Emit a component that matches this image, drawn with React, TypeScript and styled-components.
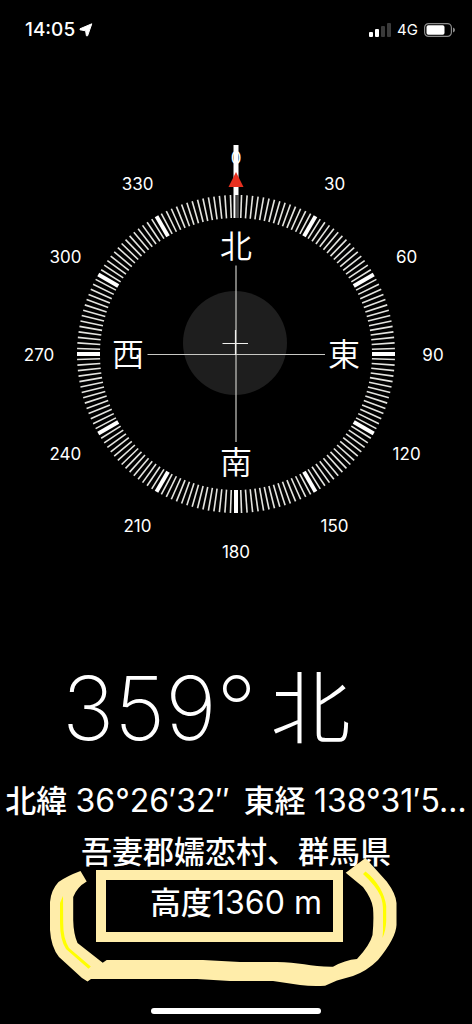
import React from "react";
import styled, { createGlobalStyle } from "styled-components";

const GlobalStyle = createGlobalStyle`
  *, *::before, *::after { box-sizing: border-box; }
  body {
    margin: 0;
    background: #000;
    color: #fff;
    font-family: Inter, "Noto Sans CJK JP", sans-serif;
  }
`;

const Screen = styled.main`
  display: flex;
  flex-direction: column;
  min-height: 100vh;
  overflow: hidden;
`;

const StatusBar = styled.header`
  display: flex;
  align-items: center;
  justify-content: space-between;
  height: 59px;
  padding: 0 17px 0 25px;
`;

const StatusGroup = styled.div<{ $gap: number }>`
  display: flex;
  align-items: center;
  gap: ${(p) => p.$gap}px;
`;

const Clock = styled.time`
  font-size: 19px;
  font-weight: 500;
  line-height: 24px;
`;

const Network = styled.span`
  font-size: 15px;
  font-weight: 400;
  line-height: 20px;
`;

const Dial = styled.svg`
  display: block;
  width: 100%;
  margin-top: 77px;
`;

const DialNumber = styled.text`
  fill: #fff;
  font-size: 17px;
  text-anchor: middle;
`;

const DialPoint = styled.text`
  fill: #fff;
  font-size: 32px;
  font-weight: 350;
  text-anchor: middle;
`;

const Heading = styled.h1`
  display: flex;
  align-items: center;
  gap: 14px;
  height: 134px;
  margin: 75px 0 0;
  padding-left: 62px;
  font-size: 88px;
  font-weight: 250;
  line-height: 134px;
  white-space: nowrap;
`;

const HeadingPoint = styled.span`
  font-size: 80px;
  font-weight: 300;
`;

const Details = styled.section`
  position: relative;
  font-size: 31px;
  font-weight: 500;
  line-height: 51px;
  text-align: center;
  white-space: nowrap;
`;

const Line = styled.p`
  display: flex;
  align-items: baseline;
  justify-content: center;
  height: 51px;
  margin: 0;
`;

const Coordinates = styled(Line)`
  gap: 14px;
`;

const Value = styled.span`
  font-size: 32px;
  font-weight: 400;
`;

const Marker = styled.svg`
  position: absolute;
  top: 0;
  left: 0;
  width: 100%;
  pointer-events: none;
`;

const HomeBar = styled.div`
  width: 36%;
  height: 6px;
  margin: auto auto 10px;
  border-radius: 3px;
  background: #fff;
`;

const CX = 236;
const CY = 218;
const LABEL_RADIUS = 197;

const ticks = Array.from({ length: 180 }, (_, i) => i * 2).filter((a) => a !== 0);
const labels = Array.from({ length: 12 }, (_, i) => i * 30);
const points = [
  { name: "北", x: CX, y: 122 },
  { name: "東", x: 344, y: 230 },
  { name: "南", x: CX, y: 338 },
  { name: "西", x: 128, y: 230 },
];

function CompassDial() {
  return (
    <Dial viewBox="0 0 472 430" role="img" aria-label="コンパス">
      <circle cx="235" cy="207" r="52" fill="#1e1e1e" />
      {ticks.map((angle) => (
        <line
          key={angle}
          x1={CX}
          x2={CX}
          y1={CY - 159}
          y2={CY - 136}
          stroke={angle % 30 === 0 ? "#fff" : "#e4e4e0"}
          strokeWidth={angle % 30 === 0 ? 4 : 1.6}
          transform={`rotate(${angle} ${CX} ${CY})`}
        />
      ))}
      <path d="M236 129.500V306M147.500 218.500H325" stroke="#c8c8c4" strokeWidth="1.200" />
      <path d="M222.500 207.500H248M235.500 194V219" stroke="#f0f0ee" strokeWidth="1.200" />
      {labels.map((angle) => {
        const rad = (angle * Math.PI) / 180;
        return (
          <DialNumber
            key={angle}
            x={CX + LABEL_RADIUS * Math.sin(rad)}
            y={CY + 7 - LABEL_RADIUS * Math.cos(rad)}
          >
            {angle}
          </DialNumber>
        );
      })}
      {points.map((p) => (
        <DialPoint key={p.name} x={p.x} y={p.y}>
          {p.name}
        </DialPoint>
      ))}
      <path d="M236 9V59" stroke="#fff" strokeWidth="5" />
      <path d="M234.500 59V82" stroke="#fff" strokeWidth="2" />
      <path d="M237.500 59V82" stroke="#555" strokeWidth="2.600" />
      <path d="M236 36L243.500 51H228.500Z" fill="#e8301f" />
    </Dial>
  );
}

function LocationArrow() {
  return (
    <svg width="14" height="14" viewBox="0 0 14 14" aria-hidden="true">
      <path
        d="M12.800 .8L1 5.800V6.800L6.600 7.800L7.400 12.800H8.600Z"
        fill="#fff"
        stroke="#fff"
        strokeWidth="1"
        strokeLinejoin="round"
      />
    </svg>
  );
}

function Signal() {
  return (
    <svg width="22" height="14" viewBox="0 0 22 14" aria-hidden="true">
      <rect x="0" y="9" width="4" height="5" rx="1" fill="#fff" />
      <rect x="6" y="6" width="4" height="8" rx="1" fill="#fff" />
      <rect x="12" y="3" width="4" height="11" rx="1" fill="#3a3a3a" />
      <rect x="18" y="0" width="4" height="14" rx="1" fill="#3a3a3a" />
    </svg>
  );
}

function Battery() {
  return (
    <svg width="31" height="14" viewBox="0 0 31 14" aria-hidden="true">
      <rect x=".6" y=".6" width="26.800" height="12.800" rx="4" fill="none" stroke="#8a8a8a" strokeWidth="1.200" />
      <rect x="2.500" y="2.300" width="18" height="9.500" rx="1.800" fill="#fff" />
      <path d="M29 4.500Q31 5.200 31 7T29 9.500Z" fill="#8a8a8a" />
    </svg>
  );
}

function HandDrawnMarker() {
  return (
    <Marker viewBox="0 775 472 220" aria-hidden="true">
      <rect x="101" y="875" width="237" height="62" fill="none" stroke="#ffedaa" strokeWidth="10" />
      <path
        fill="#ffedaa"
        d="M80.500 871L86.700 881.500Q77 887 73.200 897V920Q73.500 934 77.500 943L102.700 962.700L106.700 960H203L240 962H277C298 962 312 967 333 966.700Q345 960 357 959Q370 945 372.500 935Q374 920 373 908Q372 899 363 887L345.700 872.700L365.500 858L386.700 881.500Q396 894 396.500 903V925Q396 938 378 960Q367 971 353 976L337 980.500L325 985.700Q312 986.500 300 985L273 981H230L197 979H91L87.500 981.500L82 978L59 957Q51 947 50 930V902Q51 890 58.500 882Q67 876 80.500 871Z"
      />
      <path
        fill="#ff0"
        d="M63 896L60 903V923Q60 940 66 949L88.500 968.700L90.800 966.500L69 948Q63 938 63.200 923Z"
      />
      <path
        fill="#ff0"
        d="M365.500 871.500L363 874Q376 886 380.500 896Q383 902 383 911V931L382.500 938Q386 930 386.200 921V906Q385 897 380 888Q374 878 365.500 871.500Z"
      />
    </Marker>
  );
}

export default function App() {
  return (
    <>
      <GlobalStyle />
      <Screen>
        <StatusBar>
          <StatusGroup $gap={4}>
            <Clock>14:05</Clock>
            <LocationArrow />
          </StatusGroup>
          <StatusGroup $gap={6}>
            <Signal />
            <Network>4G</Network>
            <Battery />
          </StatusGroup>
        </StatusBar>
        <CompassDial />
        <Heading>
          <span>359°</span>
          <HeadingPoint>北</HeadingPoint>
        </Heading>
        <Details>
          <Coordinates>
            <span>
              北緯 <Value>36°26′32″</Value>
            </span>
            <span>
              東経 <Value>138°31′5…</Value>
            </span>
          </Coordinates>
          <Line>吾妻郡嬬恋村、群馬県</Line>
          <Line>
            高度<Value>1360 m</Value>
          </Line>
          <HandDrawnMarker />
        </Details>
        <HomeBar />
      </Screen>
    </>
  );
}
